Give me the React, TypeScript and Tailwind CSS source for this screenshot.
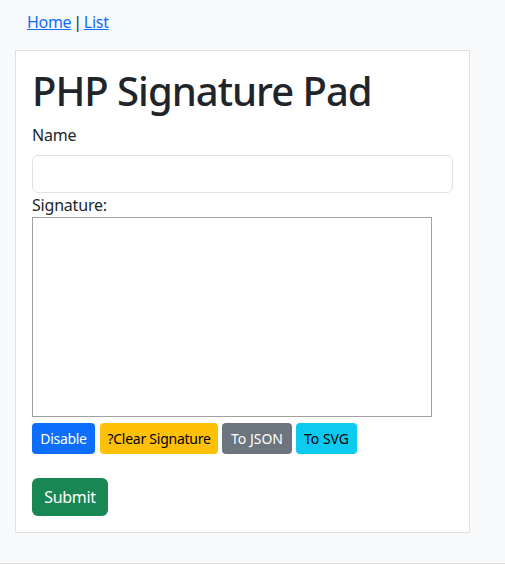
import React from "react";

export default function App() {
  const font = { fontFamily: '"Noto Sans", "Segoe UI", Arial, sans-serif' };
  return (
    <div className="w-[505px] h-[565px] bg-white" style={font}>
      <div className="h-[564px] bg-[#f8f9fa] border-b border-[#dee2e6] text-[#212529] text-[16px] leading-[24px]">
        <div className="pl-[27px] pt-[10px] h-[50px] tracking-[-0.3px]">
          <a href="#" className="text-[#0d6efd] underline">Home</a><span className="px-[2px]">|</span><a href="#" className="text-[#0d6efd] underline">List</a>
        </div>
        <div className="ml-[15px] w-[455px] bg-white border border-[#dee2e6] p-[16px]">
          <h1 className="text-[40px] leading-[48px] font-medium mb-[8px] tracking-[-1px]">PHP Signature Pad</h1>
          <label className="block mb-[8px] tracking-[-0.2px]">Name</label>
          <input className="block w-full h-[38px] border border-[#dee2e6] rounded-[6px] px-3 bg-white" />
          <label className="block tracking-[-0.2px]">Signature:</label>
          <div className="w-[400px] h-[200px] border border-[#a0a0a0] bg-white" />
          <div className="flex mt-[6px] text-[14px]">
            <button className="w-[63px] h-[31px] rounded-[4px] bg-[#0d6efd] text-white tracking-[-0.3px]">Disable</button>
            <button className="ml-[5px] w-[118px] h-[31px] rounded-[4px] bg-[#ffc107] text-black tracking-[-0.25px]">?Clear Signature</button>
            <button className="ml-[4px] w-[70px] h-[31px] rounded-[4px] bg-[#6c757d] text-white">To JSON</button>
            <button className="ml-[4px] w-[61px] h-[31px] rounded-[4px] bg-[#0dcaf0] text-black">To SVG</button>
          </div>
          <button className="block mt-[24px] w-[76px] h-[38px] text-[16px] rounded-[6px] bg-[#198754] text-white tracking-[-0.3px]">Submit</button>
        </div>
      </div>
    </div>
  );
}
